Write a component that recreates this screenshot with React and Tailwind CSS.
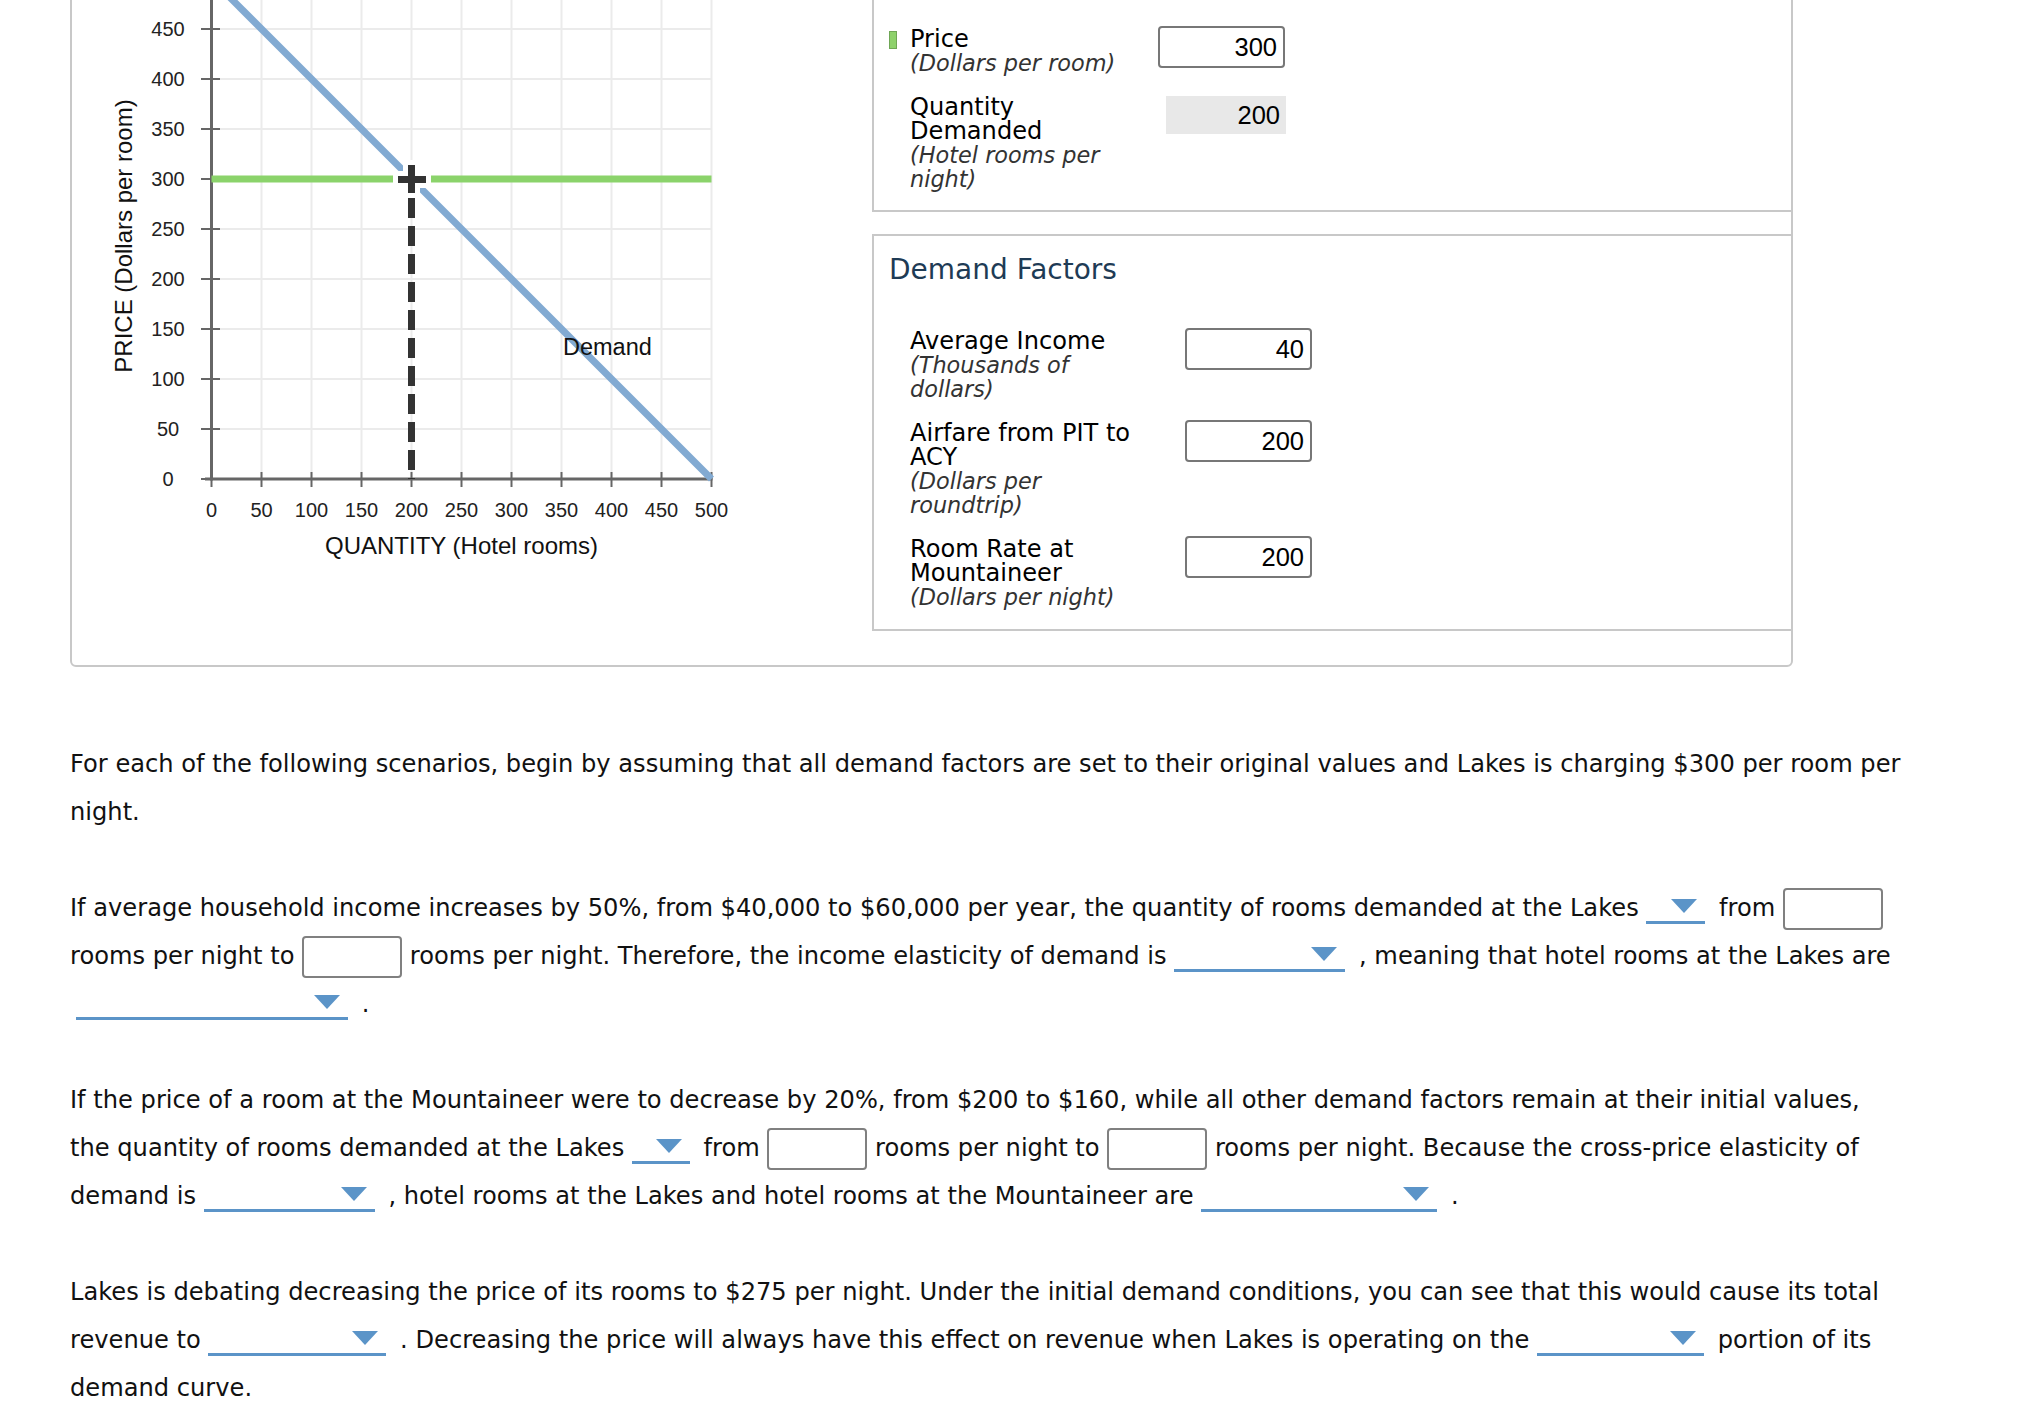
import React from 'react';

const ticks = [0, 50, 100, 150, 200, 250, 300, 350, 400, 450, 500];
const X0 = 211.5;
const Y0 = 479;
const px = (q) => X0 + q;
const py = (p) => Y0 - p;

const Chart = () => (
  <svg width="800" height="703" viewBox="72 -38 800 703" className="block shrink-0 font-['Liberation_Sans',Arial,sans-serif]">
    {/* grid */}
    {ticks.slice(1).map((t) => (
      <line key={'gv' + t} x1={px(t)} x2={px(t)} y1={-40} y2={Y0} stroke="#ebebeb" strokeWidth="2" />
    ))}
    {ticks.slice(1).map((t) => (
      <line key={'gh' + t} x1={X0} x2={px(500)} y1={py(t)} y2={py(t)} stroke="#ebebeb" strokeWidth="2" />
    ))}

    {/* axes */}
    <line x1={X0} x2={X0} y1={-40} y2={Y0 + 1.5} stroke="#666" strokeWidth="3" />
    <line x1={205} x2={px(500) + 1} y1={Y0} y2={Y0} stroke="#666" strokeWidth="3" />
    {ticks.slice(0, 10).map((t) => (
      <line key={'ty' + t} x1={201} x2={220} y1={py(t)} y2={py(t)} stroke="#666" strokeWidth="2" />
    ))}
    {ticks.map((t) => (
      <line key={'tx' + t} x1={px(t)} x2={px(t)} y1={t === 0 ? Y0 : 472} y2={487} stroke="#666" strokeWidth="2" />
    ))}

    {/* tick labels */}
    {ticks.slice(0, 10).map((t) => (
      <text key={'ly' + t} x={168} y={py(t)} textAnchor="middle" dominantBaseline="central" fontSize="20" fill="#222">
        {t}
      </text>
    ))}
    {ticks.map((t) => (
      <text key={'lx' + t} x={px(t)} y={510} textAnchor="middle" dominantBaseline="central" fontSize="20" fill="#222">
        {t}
      </text>
    ))}

    {/* axis titles */}
    <text x={461.5} y={545} textAnchor="middle" dominantBaseline="central" fontSize="24" fill="#111">
      QUANTITY (Hotel rooms)
    </text>
    <text x={123} y={236} textAnchor="middle" dominantBaseline="central" fontSize="24" fill="#111" transform="rotate(-90 123 236)">
      PRICE (Dollars per room)
    </text>

    {/* price line and demand curve */}
    <line x1={X0} x2={px(500)} y1={py(300)} y2={py(300)} stroke="#8bd36b" strokeWidth="7" />
    <line x1={px(0)} y1={py(500)} x2={px(500)} y2={py(0)} stroke="#82aad2" strokeWidth="7" />
    <line x1={px(200)} x2={px(200)} y1={198} y2={Y0} stroke="#333" strokeWidth="7" strokeDasharray="20 8" />

    {/* draggable point */}
    <path d="M393 179.5 H431 M411.5 160 V198" stroke="#fff" strokeWidth="17" />
    <path d="M398 179.5 H426 M411.5 165 V193" stroke="#333" strokeWidth="7" />

    <text x={563} y={346.5} dominantBaseline="central" fontSize="23.5" fill="#111">
      Demand
    </text>
  </svg>
);

const Label = ({ lines, sub }) => (
  <div className="pt-[1px] leading-[24px]">
    {lines.map((l) => (
      <div key={l} className="text-[24.1px] text-black whitespace-nowrap">
        {l}
      </div>
    ))}
    {sub.map((l) => (
      <div key={l} className="text-[22.4px] italic text-[#333] whitespace-nowrap">
        {l}
      </div>
    ))}
  </div>
);

const NumBox = ({ value }) => (
  <input
    type="text"
    readOnly
    defaultValue={value}
    className="w-[127px] h-[42px] border-2 border-[#777] rounded-[4px] bg-white text-right pr-[6px] font-['Liberation_Sans',Arial,sans-serif] text-[25.5px] text-black outline-none"
  />
);

const Dropdown = ({ className }) => (
  <span className={`relative inline-block h-[26px] border-b-[3px] border-[#5b94c8] align-[-8px] ${className}`}>
    <svg className="absolute right-[8px] bottom-[8px]" width="26" height="14" viewBox="0 0 26 14">
      <path d="M0 0 H26 L13 14 Z" fill="#5b94c8" />
    </svg>
  </span>
);

const Blank = () => (
  <input
    type="text"
    readOnly
    className="w-[100px] h-[42px] border-2 border-[#808080] rounded-[4px] bg-white align-middle outline-none"
  />
);

export default function App() {
  return (
    <div className="w-full h-[1417px] overflow-hidden bg-white font-['DejaVu_Sans',Verdana,sans-serif] text-[#111]">
      {/* graph + tables */}
      <div className="ml-[70px] mt-[-40px] w-[1723px] h-[707px] border-2 border-[#c8c8c8] rounded-b-[6px] flex">
        <Chart />

        <div className="flex-1 flex flex-col">
          <div className="h-[250px] border-l-2 border-b-2 border-[#c8c8c8] pl-[15px] pt-[64px] flex flex-col gap-[19px]">
            <div className="flex items-start">
              <div className="w-[21px] pt-[5px]">
                <div className="w-[8px] h-[18px] bg-[#8ed16b] border border-[#6fa655]" />
              </div>
              <div className="w-[248px]">
                <Label lines={['Price']} sub={['(Dollars per room)']} />
              </div>
              <NumBox value="300" />
            </div>
            <div className="flex items-start">
              <div className="w-[21px]" />
              <div className="w-[256px]">
                <Label lines={['Quantity', 'Demanded']} sub={['(Hotel rooms per', 'night)']} />
              </div>
              <div className="mt-[2px] w-[120px] h-[38px] bg-[#e8e8e8] flex items-center justify-end pr-[6px] font-['Liberation_Sans',Arial,sans-serif] text-[25.5px] text-black">
                200
              </div>
            </div>
          </div>

          <div className="mt-[22px] h-[397px] border-l-2 border-t-2 border-b-2 border-[#c8c8c8] pl-[15px] pt-[17px]">
            <h2 className="text-[28px] leading-[34px] text-[#1e3b55] font-normal">Demand Factors</h2>
            <div className="mt-[41px] flex flex-col gap-[19px]">
              <div className="flex items-start">
                <div className="w-[21px]" />
                <div className="w-[275px]">
                  <Label lines={['Average Income']} sub={['(Thousands of', 'dollars)']} />
                </div>
                <NumBox value="40" />
              </div>
              <div className="flex items-start">
                <div className="w-[21px]" />
                <div className="w-[275px]">
                  <Label lines={['Airfare from PIT to', 'ACY']} sub={['(Dollars per', 'roundtrip)']} />
                </div>
                <NumBox value="200" />
              </div>
              <div className="flex items-start">
                <div className="w-[21px]" />
                <div className="w-[275px]">
                  <Label lines={['Room Rate at', 'Mountaineer']} sub={['(Dollars per night)']} />
                </div>
                <NumBox value="200" />
              </div>
            </div>
          </div>
        </div>
      </div>

      {/* questions */}
      <div className="ml-[70px] mt-[73px] text-[24.15px] leading-[48px] whitespace-nowrap">
        <p className="mb-[48px]">
          For each of the following scenarios, begin by assuming that all demand factors are set to their original values and Lakes is charging $300 per room per
          <br />
          night.
        </p>

        <p className="mb-[48px]">
          If average household income increases by 50%, from $40,000 to $60,000 per year, the quantity of rooms demanded at the Lakes{' '}
          <Dropdown className="w-[59px] mr-[6px]" /> from <Blank />
          <br />
          rooms per night to <Blank /> rooms per night. Therefore, the income elasticity of demand is{' '}
          <Dropdown className="w-[171px] mr-[6px]" /> , meaning that hotel rooms at the Lakes are
          <br />
          <Dropdown className="w-[272px] ml-[6px] mr-[6px]" /> .
        </p>

        <p className="mb-[48px]">
          If the price of a room at the Mountaineer were to decrease by 20%, from $200 to $160, while all other demand factors remain at their initial values,
          <br />
          the quantity of rooms demanded at the Lakes <Dropdown className="w-[58px] mr-[6px]" /> from <Blank /> rooms per night to <Blank /> rooms per
          night. Because the cross-price elasticity of
          <br />
          demand is <Dropdown className="w-[171px] mr-[6px]" /> , hotel rooms at the Lakes and hotel rooms at the Mountaineer are{' '}
          <Dropdown className="w-[236px] mr-[6px]" /> .
        </p>

        <p>
          Lakes is debating decreasing the price of its rooms to $275 per night. Under the initial demand conditions, you can see that this would cause its total
          <br />
          revenue to <Dropdown className="w-[178px] mr-[6px]" /> . Decreasing the price will always have this effect on revenue when Lakes is operating on the{' '}
          <Dropdown className="w-[167px] mr-[6px]" /> portion of its
          <br />
          demand curve.
        </p>
      </div>
    </div>
  );
}
